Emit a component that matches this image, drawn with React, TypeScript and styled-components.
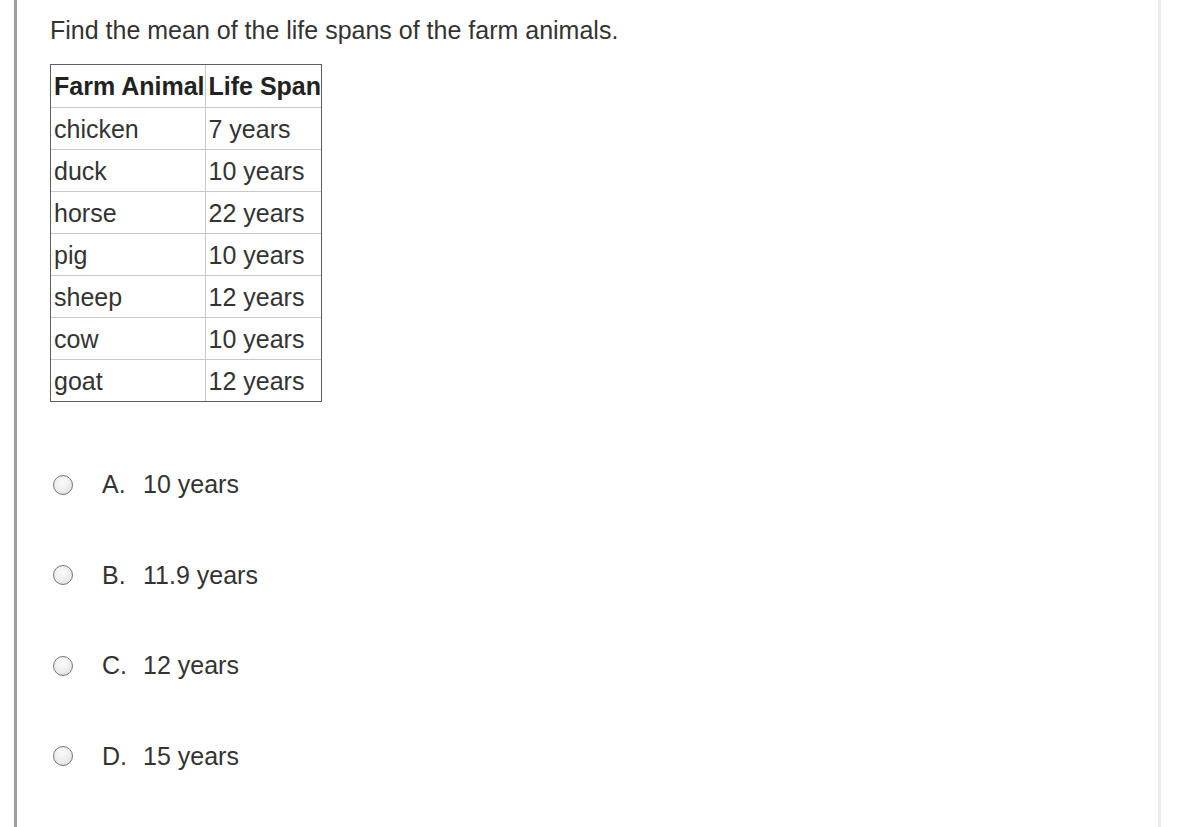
import React from 'react';
import styled, { createGlobalStyle } from 'styled-components';

const GlobalStyle = createGlobalStyle`
  body {
    margin: 0;
    background: #fff;
    font-family: "Liberation Sans", Helvetica, Arial, sans-serif;
    color: #333;
  }
`;

const Page = styled.div`
  display: flex;
  min-height: 827px;
  padding-left: 14px;
`;

const Panel = styled.main`
  box-sizing: border-box;
  width: 1147px;
  min-height: 827px;
  border-left: 3px solid #9d9d9d;
  border-right: 3px solid #ededed;
  padding: 16px 0 0 33px;
`;

const Question = styled.p`
  margin: 0;
  font-size: 25px;
  line-height: 29px;
`;

const DataTable = styled.table`
  margin-top: 19px;
  border-collapse: separate;
  border-spacing: 0;
  border: 1px solid #5e5e5e;
  font-size: 25px;
  line-height: 29px;
`;

const HeadCell = styled.th<{ last?: boolean }>`
  height: 41px;
  padding: 1px 0 0 3px;
  text-align: left;
  font-weight: bold;
  color: #222;
  border-bottom: 1px solid #c8c8c8;
  border-right: ${p => (p.last ? 'none' : '1px solid #c8c8c8')};
  vertical-align: middle;
  white-space: nowrap;
`;

const Cell = styled.td<{ last?: boolean; bottom?: boolean }>`
  height: 40px;
  padding: 1px 0 0 3px;
  color: #333;
  border-bottom: ${p => (p.bottom ? 'none' : '1px solid #c8c8c8')};
  border-right: ${p => (p.last ? 'none' : '1px solid #c8c8c8')};
  vertical-align: middle;
  white-space: nowrap;
`;

const Options = styled.div`
  margin-top: 68px;
  display: flex;
  flex-direction: column;
  gap: 61.6px;
`;

const Option = styled.label`
  display: flex;
  align-items: center;
  height: 29px;
  font-size: 25px;
  line-height: 29px;
  color: #333;
  cursor: pointer;
`;

const Radio = styled.span`
  box-sizing: border-box;
  width: 20px;
  height: 20px;
  margin-left: 3px;
  margin-right: 29px;
  border-radius: 50%;
  border: 1.5px solid #767676;
  background: radial-gradient(circle at 45% 35%, #fbfbfb 0%, #ececec 55%, #d6d6d6 100%);
  flex-shrink: 0;
`;

const Letter = styled.span`
  width: 41px;
  flex-shrink: 0;
`;

const rows = [
  { animal: 'chicken', span: '7 years' },
  { animal: 'duck', span: '10 years' },
  { animal: 'horse', span: '22 years' },
  { animal: 'pig', span: '10 years' },
  { animal: 'sheep', span: '12 years' },
  { animal: 'cow', span: '10 years' },
  { animal: 'goat', span: '12 years' },
];

const choices = [
  { letter: 'A.', text: '10 years' },
  { letter: 'B.', text: '11.9 years' },
  { letter: 'C.', text: '12 years' },
  { letter: 'D.', text: '15 years' },
];

const App: React.FC = () => (
  <>
    <GlobalStyle />
    <Page>
      <Panel>
        <Question>Find the mean of the life spans of the farm animals.</Question>
        <DataTable>
          <thead>
            <tr>
              <HeadCell>Farm Animal</HeadCell>
              <HeadCell last>Life Span</HeadCell>
            </tr>
          </thead>
          <tbody>
            {rows.map((r, i) => (
              <tr key={r.animal}>
                <Cell bottom={i === rows.length - 1}>{r.animal}</Cell>
                <Cell last bottom={i === rows.length - 1}>{r.span}</Cell>
              </tr>
            ))}
          </tbody>
        </DataTable>
        <Options>
          {choices.map(c => (
            <Option key={c.letter}>
              <Radio />
              <Letter>{c.letter}</Letter>
              <span>{c.text}</span>
            </Option>
          ))}
        </Options>
      </Panel>
    </Page>
  </>
);

export default App;
